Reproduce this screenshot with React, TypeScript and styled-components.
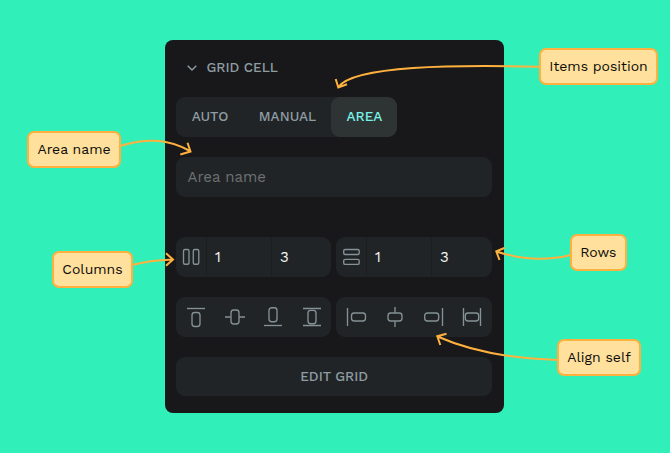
import React from "react";
import styled, { createGlobalStyle } from "styled-components";

const GlobalStyle = createGlobalStyle`
  * { box-sizing: border-box; }
  body { margin: 0; background: #31efb8; font-family: "Work Sans", Inter, sans-serif; }
`;

const Canvas = styled.main`
  position: relative;
  width: 670px;
  height: 453px;
  overflow: hidden;
  padding: 40px 0 0 165.4px;
  background: #31efb8;
`;

const Panel = styled.section`
  width: 339px;
  height: 373px;
  padding: 0 12.5px 0 11.1px;
  border-radius: 8px;
  background: #18181a;
  display: flex;
  flex-direction: column;
`;

const Text = styled.span<{ $size?: number; $spacing?: number }>`
  font-size: ${(p) => p.$size ?? 14}px;
  letter-spacing: ${(p) => p.$spacing ?? 0}px;
  line-height: 20px;
  white-space: nowrap;
`;

const Caption = styled.span`
  display: block;
  padding-bottom: 2px;
  font-size: 13.6px;
  font-weight: 550;
  line-height: 20px;
  white-space: nowrap;
`;

const Header = styled.header`
  height: 57px;
  padding: 0 0 2px 10px;
  display: flex;
  align-items: center;
  gap: 8px;
  color: #8f9da3;
`;

const Tabs = styled.div`
  display: flex;
  width: 221px;
  height: 40px;
  border-radius: 9px;
  background: #212426;
`;

const Tab = styled.button<{ $width: number; $active?: boolean }>`
  width: ${(p) => p.$width}px;
  padding: 0;
  border: 0;
  border-radius: 9px;
  background: ${(p) => (p.$active ? "#2e3434" : "transparent")};
  color: ${(p) => (p.$active ? "#78f2e8" : "#8f9da3")};
  font-family: inherit;
`;

const NameField = styled.div`
  display: flex;
  align-items: center;
  height: 40px;
  margin-top: 20px;
  padding-left: 11px;
  border-radius: 9px;
  background: #212426;
  color: #6d7174;
`;

const Pair = styled.div<{ $top: number }>`
  display: grid;
  grid-template-columns: 155px 155.4px;
  gap: 5px;
  margin-top: ${(p) => p.$top}px;
`;

const Group = styled.div`
  display: flex;
  height: 40px;
  border-radius: 9px;
  background: #212426;
`;

const TrackIcon = styled.div`
  display: flex;
  flex: none;
  align-items: center;
  justify-content: center;
  width: 30px;
`;

const TrackValue = styled.div<{ $width: number }>`
  display: flex;
  flex: none;
  align-items: center;
  width: ${(p) => p.$width}px;
  padding-left: 7.5px;
  border-left: 1px solid #1c1e20;
  color: #f4f4f4;
`;

const AlignButton = styled.button`
  display: flex;
  align-items: center;
  justify-content: center;
  flex: 1;
  padding: 0;
  border: 0;
  background: transparent;
`;

const EditButton = styled.button`
  height: 39px;
  margin-top: 20px;
  border: 0;
  border-radius: 9px;
  background: #212426;
  color: #8f9da3;
  font-family: inherit;
`;

const Arrows = styled.svg`
  position: absolute;
  inset: 0;
  fill: none;
  stroke: #ffb13f;
  stroke-width: 2;
  pointer-events: none;
`;

const Callout = styled.div<{ $x: number; $y: number; $w: number }>`
  position: absolute;
  left: ${(p) => p.$x}px;
  top: ${(p) => p.$y}px;
  width: ${(p) => p.$w}px;
  height: 37px;
  padding-bottom: 2px;
  display: flex;
  align-items: center;
  justify-content: center;
  border: 2px solid #ffb13f;
  border-radius: 7px;
  background: #ffe09c;
  color: #0b0b0b;
`;

const LineIcon = styled.svg`
  display: block;
  fill: none;
  stroke: #849196;
  stroke-width: 1.35;
`;

const ColumnsIcon = () => (
  <LineIcon width="20" height="20">
    <rect x="2.5" y="2.5" width="5.5" height="14.7" rx="1.5" />
    <rect x="12.3" y="2.5" width="5.5" height="14.7" rx="1.5" />
  </LineIcon>
);

const RowsIcon = () => (
  <LineIcon width="20" height="20">
    <rect x="2.7" y="2.5" width="15.5" height="5" rx="1.5" />
    <rect x="2.7" y="12.4" width="15.5" height="5" rx="1.5" />
  </LineIcon>
);

type Position = "start" | "center" | "end" | "stretch";
const positions: Position[] = ["start", "center", "end", "stretch"];

const lines: Record<Position, string> = {
  start: "M1 1.5H19",
  center: "M0 10H5.8M14.2 10H20",
  end: "M1 18.5H19",
  stretch: "M1 1.5H19M1 18.5H19",
};

const boxes: Record<Position, { y: number; height: number }> = {
  start: { y: 5.5, height: 14 },
  center: { y: 3, height: 14 },
  end: { y: 0.7, height: 14 },
  stretch: { y: 3.3, height: 13.4 },
};

const AlignIcon = ({ position, sideways }: { position: Position; sideways?: boolean }) => (
  <LineIcon width="20" height="20" overflow="visible">
    <g transform={sideways ? "matrix(0 1 1 0 0 0)" : undefined}>
      <path d={lines[position]} />
      <rect x="6" width="8" rx="2.7" {...boxes[position]} />
    </g>
  </LineIcon>
);

const callouts = [
  { text: "Area name", x: 27, y: 131, w: 94 },
  { text: "Items position", x: 539, y: 48, w: 119 },
  { text: "Columns", x: 52, y: 251, w: 81 },
  { text: "Rows", x: 569.5, y: 234, w: 57.5 },
  { text: "Align self", x: 557, y: 339, w: 84 },
];

export default function App() {
  return (
    <>
      <GlobalStyle />
      <Canvas>
        <Panel>
          <Header>
            <svg width="12" height="12" fill="none" stroke="#8f9da3" strokeWidth="1.4">
              <path d="M1.7 3.7 6 8l4.3-4.3" />
            </svg>
            <Caption>GRID CELL</Caption>
          </Header>
          <Tabs>
            <Tab $width={67}><Caption>AUTO</Caption></Tab>
            <Tab $width={88}><Caption>MANUAL</Caption></Tab>
            <Tab $width={66} $active><Caption>AREA</Caption></Tab>
          </Tabs>
          <NameField><Text $size={15}>Area name</Text></NameField>
          <Pair $top={40}>
            {[<ColumnsIcon key="columns" />, <RowsIcon key="rows" />].map((icon, i) => (
              <Group key={i}>
                <TrackIcon>{icon}</TrackIcon>
                <TrackValue $width={65}><Text $size={15}>1</Text></TrackValue>
                <TrackValue $width={59}><Text $size={15}>3</Text></TrackValue>
              </Group>
            ))}
          </Pair>
          <Pair $top={20}>
            {[false, true].map((sideways) => (
              <Group key={String(sideways)}>
                {positions.map((p) => (
                  <AlignButton key={p} aria-label={p}>
                    <AlignIcon position={p} sideways={sideways} />
                  </AlignButton>
                ))}
              </Group>
            ))}
          </Pair>
          <EditButton><Caption>EDIT GRID</Caption></EditButton>
        </Panel>
        <Arrows width="670" height="453">
          <path d="M540 66.8C455 64.8 354 65.5 338.5 87M335.7 79 338.3 87.5 347 84.3" />
          <path d="M120 146C146 138 167 138.5 190 151M187.5 142.7 190.5 151.5 180.3 154.5" />
          <path d="M132 265Q149 260.4 173 259.5M166 253.3 173 259.5 166 265.7" />
          <path d="M571 255Q534 264 496.5 251.5M505 247.8 496.3 251.3 499.5 260" />
          <path d="M558 360Q486 358 437.5 336.5M446.5 333.8 437.3 336.3 440.3 345" />
        </Arrows>
        {callouts.map((c) => (
          <Callout key={c.text} $x={c.x} $y={c.y} $w={c.w}>
            <Text>{c.text}</Text>
          </Callout>
        ))}
      </Canvas>
    </>
  );
}
